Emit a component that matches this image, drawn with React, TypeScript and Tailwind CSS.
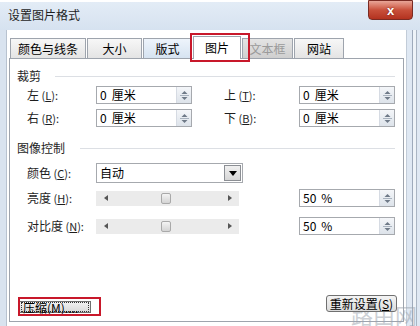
import React from 'react';

const font = { fontFamily: '"Noto Sans CJK SC", "Liberation Sans", sans-serif' };

const Spinner = () => (
  <div className="w-[15px] h-full flex flex-col items-center justify-center border-l border-[#d6dbe3] bg-gradient-to-b from-[#f4f6f9] to-[#dde3ea]">
    <svg width="9" height="11" viewBox="0 0 9 11">
      <path d="M4.5 1 L7.5 4 L1.5 4 Z" fill="#6f7a88" />
      <line x1="0" y1="5.5" x2="9" y2="5.5" stroke="#a9b3bf" />
      <path d="M1.5 7 L7.5 7 L4.5 10 Z" fill="#6f7a88" />
    </svg>
  </div>
);

const NumBox = ({ num, unit }: { num: string; unit: string }) => (
  <div className="w-[96px] h-[18px] flex items-stretch border border-[#a6a9ae] bg-white">
    <div className="flex-1 flex gap-[5px] pl-[3px] text-[12px] leading-[16px] text-black">
      <span>{num}</span>
      <span>{unit}</span>
    </div>
    <Spinner />
  </div>
);

const Label = ({ text, k, w }: { text: string; k: string; w: string }) => (
  <div className={`${w} text-[12px] text-[#1e1e1e] whitespace-pre`}>
    {text}
    <span className="text-[11px]">
      {' '}(<u>{k}</u>):
    </span>
  </div>
);

const Slider = () => (
  <div className="w-[143px] h-[15px] flex items-center bg-[#ebebeb] pl-[8px] pr-[7px]">
    <svg width="4" height="6" viewBox="0 0 4 6">
      <path d="M4 0 L0 3 L4 6 Z" fill="#555" />
    </svg>
    <div className="w-[10px] h-[11px] ml-[53px] rounded-[2px] border border-[#a9a9a9] bg-gradient-to-b from-[#f4f4f4] to-[#d4d4d4]" />
    <div className="flex-1" />
    <svg width="4" height="6" viewBox="0 0 4 6">
      <path d="M0 0 L4 3 L0 6 Z" fill="#555" />
    </svg>
  </div>
);

const Section = ({ title, w }: { title: string; w: string }) => (
  <div className="flex items-center pl-[7px] pr-[8px] h-[16px]">
    <span className={`${w} text-[12px] text-[#1e1e1e]`}>{title}</span>
    <div className="flex-1 h-px bg-[#dcdfe4]" />
  </div>
);

const tabs = [
  { t: '颜色与线条', w: 'w-[76px]', cls: 'bg-gradient-to-b from-[#f7f7f7] to-[#e4e4e4] text-black' },
  { t: '大小', w: 'w-[55px]', cls: 'bg-gradient-to-b from-[#f7f7f7] to-[#e4e4e4] text-black' },
  { t: '版式', w: 'w-[49px]', cls: 'bg-gradient-to-b from-[#eef4fb] to-[#d6e3f1] text-black' },
];
const tabsRight = [
  { t: '文本框', w: 'w-[51px]', cls: 'bg-gradient-to-b from-[#e4e4e4] to-[#cfcfcf] text-[#9a9a9a]' },
  { t: '网站', w: 'w-[50px]', cls: 'bg-gradient-to-b from-[#f7f7f7] to-[#e4e4e4] text-black' },
];

export default function App() {
  return (
    <div className="w-[420px] h-[326px] overflow-hidden relative bg-[#dfe8f3] flex flex-col" style={font}>
      {/* title bar */}
      <div className="h-[30px] flex items-start justify-between border-t-2 border-white bg-gradient-to-b from-[#e3ecf6] to-[#d6e2f0]">
        <div className="pl-[8px] pt-[4px] text-[12px] text-[#1e1e1e]">设置图片格式</div>
        <div className="mr-[7px] -mt-[2px] w-[45px] h-[20px] rounded-b-[4px] border border-[#7a2b23] bg-gradient-to-b from-[#e8a597] via-[#c9503b] to-[#b3321f] flex items-center justify-center">
          <span className="text-white font-bold text-[13px] leading-none" style={{ fontFamily: '"Liberation Sans", sans-serif', textShadow: '0 0 2px #6b1a10' }}>x</span>
        </div>
      </div>

      <div className="flex-1 flex">
        {/* left frame */}
        <div className="w-[7px] border-r border-[#b8c2cf] bg-[#d9e3ef]" />
        {/* client */}
        <div className="w-[399px] bg-white flex flex-col pt-[5px] pl-[2px]">
          {/* tabs */}
          <div className="h-[23px] flex items-end pl-[1px] gap-[1px]">
            {tabs.map((x) => (
              <div key={x.t} className={`${x.w} h-[20px] border border-b-0 border-[#9ea4ad] flex items-center justify-center text-[12px] ${x.cls}`}>
                {x.t}
              </div>
            ))}
            <div className="w-[48px] h-[23px] -mb-px relative z-10 border border-b-0 border-[#9ea4ad] bg-white flex items-center justify-center text-[12px] text-black">
              图片
            </div>
            {tabsRight.map((x) => (
              <div key={x.t} className={`${x.w} h-[20px] border border-b-0 border-[#9ea4ad] flex items-center justify-center text-[12px] ${x.cls}`}>
                {x.t}
              </div>
            ))}
          </div>

          {/* panel */}
          <div className="w-[395px] h-[264px] border border-[#9ea4ad] bg-white flex flex-col pt-[9px]">
            <Section title="裁剪" w="w-[38px]" />
            <div className="flex items-center mt-[2px] pl-[17px]">
              <Label text="左" k="L" w="w-[69px]" />
              <NumBox num="0" unit="厘米" />
              <div className="w-[32px]" />
              <Label text="上" k="T" w="w-[75px]" />
              <NumBox num="0" unit="厘米" />
            </div>
            <div className="flex items-center mt-[5px] pl-[17px]">
              <Label text="右" k="R" w="w-[69px]" />
              <NumBox num="0" unit="厘米" />
              <div className="w-[32px]" />
              <Label text="下" k="B" w="w-[75px]" />
              <NumBox num="0" unit="厘米" />
            </div>

            <div className="mt-[13px]">
              <Section title="图像控制" w="w-[63px]" />
            </div>
            <div className="flex items-center mt-[7px] pl-[17px]">
              <Label text="颜色" k="C" w="w-[69px]" />
              <div className="w-[147px] h-[20px] flex items-stretch border border-[#a6a9ae] bg-white">
                <div className="flex-1 pl-[3px] text-[12px] leading-[18px]">自动</div>
                <div className="w-[17px] m-[1px] border border-[#8c8f94] bg-gradient-to-b from-[#f0f0f0] to-[#d6d6d6] flex items-center justify-center">
                  <svg width="8" height="5" viewBox="0 0 8 5">
                    <path d="M0 0 L8 0 L4 5 Z" fill="#000" />
                  </svg>
                </div>
              </div>
            </div>
            <div className="flex items-center mt-[6px] pl-[17px]">
              <Label text="亮度" k="H" w="w-[69px]" />
              <Slider />
              <div className="w-[60px]" />
              <NumBox num="50" unit="%" />
            </div>
            <div className="flex items-center mt-[10px] pl-[17px]">
              <Label text="对比度" k="N" w="w-[69px]" />
              <Slider />
              <div className="w-[60px]" />
              <NumBox num="50" unit="%" />
            </div>

            <div className="flex-1" />
            <div className="relative flex items-end justify-between pl-[9px] pr-[6px] pb-[8px]">
              {/* watermark sits behind the reset button */}
              <div className="absolute right-[-14px] bottom-[-4px] text-[22px] text-[#9aa3ad] opacity-50 leading-none">路由网</div>
              <div className="w-[72px] h-[12px] border border-[#707070] bg-gradient-to-b from-[#f2f2f2] to-[#d9d9d9] flex items-center px-[1px]">
                <div className="flex-1 h-full border border-dotted border-[#333] text-[12px] leading-[10px] pl-[1px]">
                  压缩(<u>M</u>)....
                </div>
              </div>
              <div className="relative w-[71px] h-[17px] mb-[1px] rounded-[3px] border border-[#707070] bg-gradient-to-b from-[#f4f4f4] to-[#dcdcdc] flex items-center justify-center text-[12px] leading-none">
                重新设置(<u>S</u>)
              </div>
            </div>
          </div>
          <div className="flex-1" />
        </div>
        {/* right frame */}
        <div className="flex-1 border-l border-[#c2ccd8] bg-[#dfe8f3] flex">
          <div className="w-[5px]" />
          <div className="w-px bg-[#9eaabb]" />
          <div className="w-[3px] bg-[#eef3f8]" />
          <div className="w-px bg-[#aab5c3]" />
        </div>
      </div>

      {/* highlight boxes */}
      <div className="absolute left-[190px] top-[33px] w-[60px] h-[29px] border-2 border-[#c8182a] z-20" />
      <div className="absolute left-[18px] top-[297px] w-[83px] h-[19px] border-2 border-[#c8182a] z-20" />
    </div>
  );
}
